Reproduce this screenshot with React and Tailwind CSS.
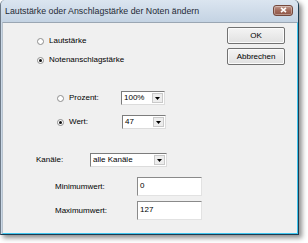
import React from "react";

const font = { fontFamily: '"Liberation Sans", Arial, sans-serif' };

function Radio({ checked }) {
  return (
    <span className="w-[7px] h-[7px] rounded-full border border-[#8d8d8d] bg-white shrink-0 flex items-center justify-center">
      {checked && <span className="w-[3px] h-[3px] rounded-full bg-[#111]" />}
    </span>
  );
}

function Combo({ value, className }) {
  return (
    <div className={`${className} h-[14px] flex bg-white border border-t-[#7c7c7c] border-l-[#7c7c7c] border-r-[#dcdcdc] border-b-[#dcdcdc]`}>
      <span className="flex-1 pl-[2px] leading-[12px] text-[8px] text-black">{value}</span>
      <span className="w-[11px] my-[1px] mr-[1px] bg-[#ededed] border border-[#c9c9c9] flex items-center justify-center">
        <svg width="5" height="3" viewBox="0 0 5 3">
          <path d="M0 0h5L2.5 3z" fill="#000" />
        </svg>
      </span>
    </div>
  );
}

function Field({ value }) {
  return (
    <div className="w-[65px] h-[19px] bg-white border border-t-[#8a8a8a] border-l-[#8a8a8a] border-r-[#e2e2e2] border-b-[#e2e2e2] pl-[2px] pt-[3px] text-[8px] leading-[10px] text-black">
      {value}
    </div>
  );
}

function Button({ children, className }) {
  return (
    <div className={`${className} w-[58px] h-[17px] rounded-[2px] border border-[#727272] bg-gradient-to-b from-[#f4f4f4] to-[#e1e1e1] shadow-[inset_0_0_0_1px_#fbfbfb] flex items-center justify-center text-[8px] text-black`}>
      {children}
    </div>
  );
}

export default function App() {
  return (
    <div className="w-[308px] h-[243px] bg-white overflow-hidden" style={font}>
      <div className="w-[299px] h-[235px] flex flex-col rounded-t-[5px] border-l border-r border-b border-l-[#6e7a87] border-r-[#1d3b50] border-b-[#1d3b50] bg-[#cad8e7] shadow-[3px_3px_5px_rgba(0,0,0,0.45)]">
        <div className="h-[22px] shrink-0 flex items-center rounded-t-[5px] bg-gradient-to-b from-[#dbe5f0] to-[#c4d3e3] pl-[4px] pr-[5px]">
          <span className="flex-1 text-[8.8px] text-[#1f2a36] leading-none">
            Lautstärke oder Anschlagstärke der Noten ändern
          </span>
          <span className="w-[20px] h-[11px] mt-[-2px] rounded-[3px] border border-[#74483c] bg-gradient-to-b from-[#c09a8e] via-[#a26a5b] to-[#8e5546] flex items-center justify-center shadow-[inset_0_0_0_1px_rgba(255,255,255,0.35)]">
            <svg width="7" height="6" viewBox="0 0 7 6">
              <path d="M1 0.8L6 5.2M6 0.8L1 5.2" stroke="#fff" strokeWidth="1.6" />
            </svg>
          </span>
        </div>
        <div className="flex-1 flex ml-[1px] border-t border-l border-r border-b border-t-[#9aa6b3] border-l-[#b8c3ce] border-r-[#3fc6ef] border-b-[#3fc6ef] bg-[#f0f0f0] text-[8px] text-black">
          <div className="flex-1 flex flex-col">
            <div className="h-[10px] mt-[13px] ml-[34px] flex items-center gap-[5px]">
              <Radio />
              <span className="leading-none">Lautstärke</span>
            </div>
            <div className="h-[10px] mt-[9px] ml-[34px] flex items-center gap-[5px]">
              <Radio checked />
              <span className="leading-none">Notenanschlagstärke</span>
            </div>
            <div className="h-[14px] mt-[26px] ml-[54px] flex items-center">
              <Radio />
              <span className="w-[52px] ml-[5px] leading-none">Prozent:</span>
              <Combo value="100%" className="w-[44px]" />
            </div>
            <div className="h-[14px] mt-[10px] ml-[54px] flex items-center">
              <Radio checked />
              <span className="w-[53px] ml-[5px] leading-none">Wert:</span>
              <Combo value="47" className="w-[44px]" />
            </div>
            <div className="h-[14px] mt-[24px] ml-[33px] flex items-center">
              <span className="w-[54px] leading-none">Kanäle:</span>
              <Combo value="alle Kanäle" className="w-[77px]" />
            </div>
            <div className="h-[19px] mt-[10px] ml-[52px] flex items-center">
              <span className="w-[82px] leading-none">Minimumwert:</span>
              <Field value="0" />
            </div>
            <div className="h-[19px] mt-[5px] ml-[52px] flex items-center">
              <span className="w-[82px] leading-none">Maximumwert:</span>
              <Field value="127" />
            </div>
          </div>
          <div className="flex flex-col pr-[12px]">
            <Button className="mt-[4px]">OK</Button>
            <Button className="mt-[4px]">Abbrechen</Button>
          </div>
        </div>
      </div>
    </div>
  );
}
